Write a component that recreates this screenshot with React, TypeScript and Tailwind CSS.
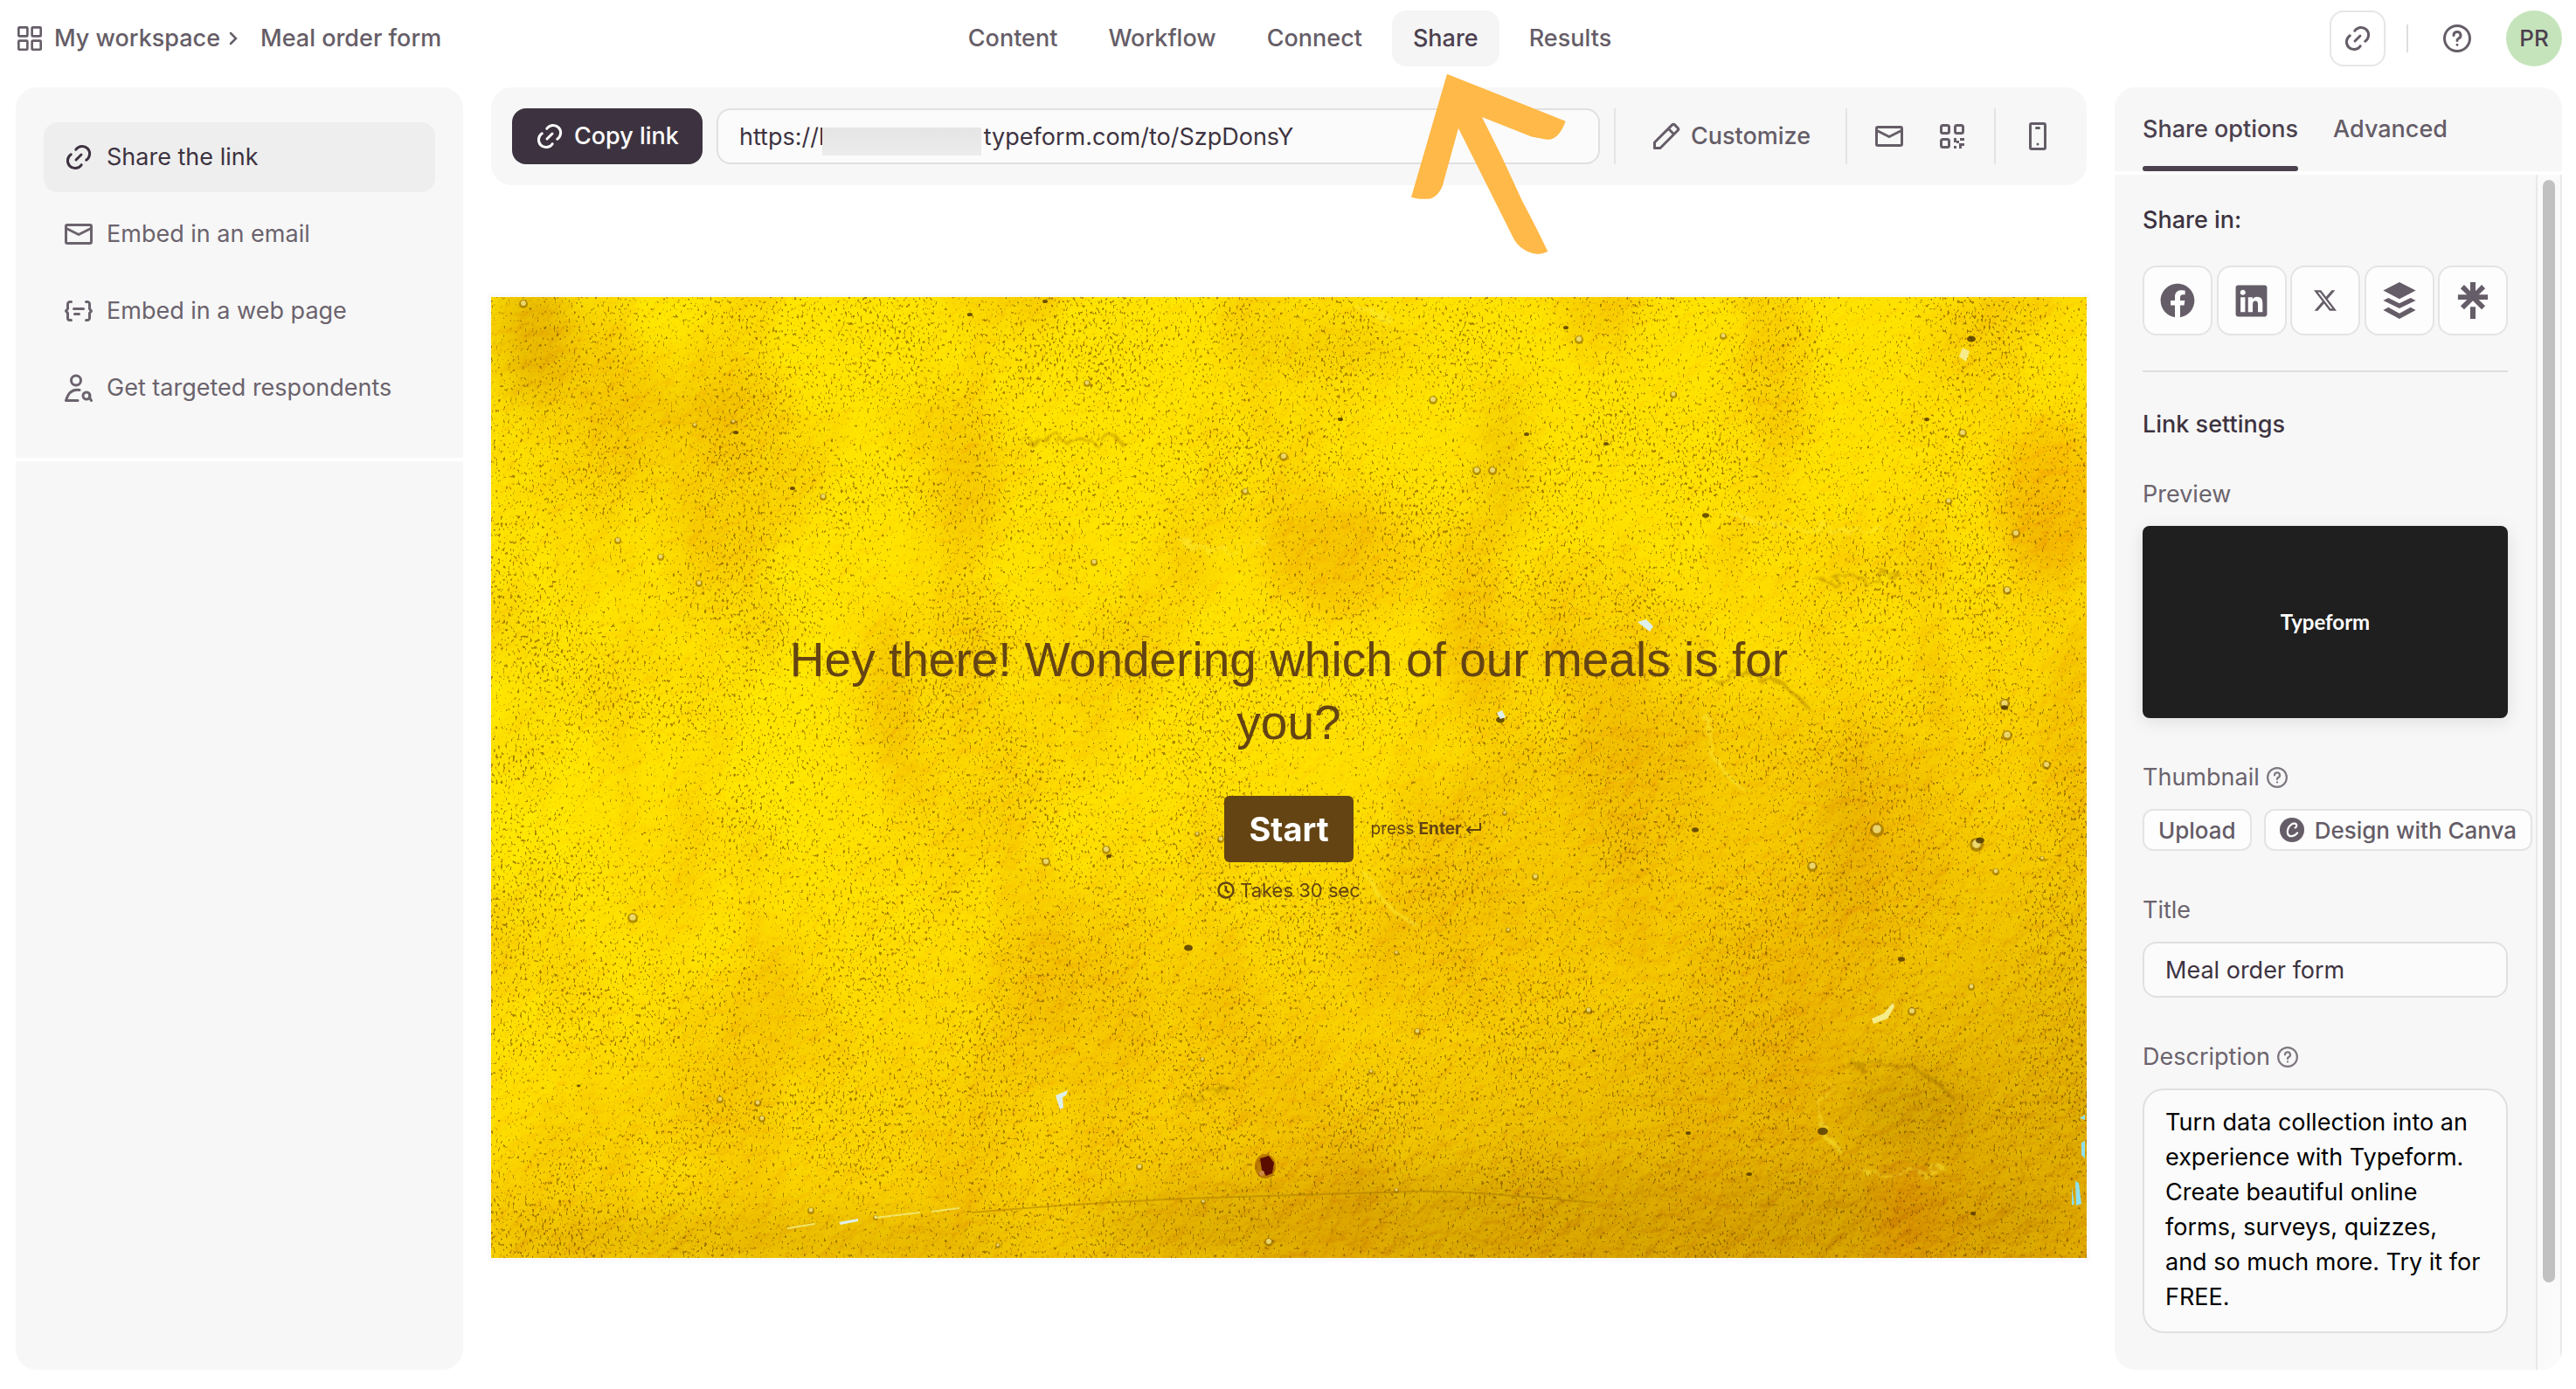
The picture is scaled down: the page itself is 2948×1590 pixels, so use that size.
import type { ReactNode } from "react";
import { FaFacebook, FaLinkedin } from "react-icons/fa";
import { SiBuffer, SiLinktree, SiX } from "react-icons/si";

type IconProps = { children: ReactNode; className?: string };

function Icon({ children, className = "size-8" }: IconProps) {
  return (
    <svg
      viewBox="0 0 32 32"
      fill="none"
      stroke="currentColor"
      strokeWidth="3"
      strokeLinecap="round"
      strokeLinejoin="round"
      aria-hidden="true"
      className={`shrink-0 ${className}`}
    >
      {children}
    </svg>
  );
}

const LinkIcon = () => (
  <Icon>
    <path d="M12.8 7.3A8.6 8.6 0 1 1 24.7 19.2M19.2 24.7A8.6 8.6 0 1 1 7.3 12.8M13 19l6-6" />
  </Icon>
);

const MailIcon = () => (
  <Icon>
    <rect x="1.5" y="5.5" width="29" height="21" rx="1.5" />
    <path d="M2 9.500l14 7 14-7" />
  </Icon>
);

const BracesIcon = () => (
  <Icon>
    <path d="M7.500 5.500H6a2.500 2.500 0 0 0-2.500 2.500v5.500L1.500 16l2 2.500V24A2.500 2.500 0 0 0 6 26.500h1.500M24.500 5.500H26a2.500 2.500 0 0 1 2.500 2.500v5.500l2 2.500-2 2.500V24a2.500 2.500 0 0 1-2.500 2.500h-1.500M10.500 13.500h11M11.500 19.500h5" />
  </Icon>
);

const PersonSearchIcon = () => (
  <Icon>
    <circle cx="13" cy="7.500" r="5.500" />
    <path d="M17 18.500c-8.500-1.500-13 3-15.500 12H15" />
    <circle cx="25" cy="25" r="4" />
    <path d="M28.500 24v3l2 3.500" />
  </Icon>
);

const PencilIcon = () => (
  <Icon>
    <path d="M2.500 29.500v-6.500L22.700 2.900a2 2 0 0 1 2.800 0l3.600 3.600a2 2 0 0 1 0 2.800L9 29.500zM18.500 7.500l6 6" />
  </Icon>
);

const QrIcon = () => (
  <Icon>
    <rect x="3.500" y="3.500" width="9" height="9" rx="2" />
    <rect x="19.500" y="3.500" width="9" height="9" rx="2" />
    <rect x="3.500" y="19.500" width="9" height="9" rx="2" />
    <path
      d="M18 18h3v3h3v3h-3v-1h-3zM25 18h5v3h-5zM18 27h3v3h-3zM24 24h6v3h-3v3h-3z"
      fill="currentColor"
      stroke="none"
    />
  </Icon>
);

const PhoneIcon = () => (
  <Icon>
    <rect x="7.500" y="1.500" width="17" height="29" rx="1.500" />
    <path d="M14.500 6.500h3M16 25v.1" />
  </Icon>
);

const GridIcon = () => (
  <Icon className="size-7">
    <rect x="1.500" y="1.500" width="11.500" height="11.500" rx="1" />
    <rect x="19" y="1.500" width="11.500" height="11.500" rx="1" />
    <rect x="1.500" y="19" width="11.500" height="11.500" rx="1" />
    <rect x="19" y="19" width="11.500" height="11.500" rx="1" />
  </Icon>
);

const HelpIcon = ({ className }: { className?: string }) => (
  <Icon className={className}>
    <circle cx="16" cy="16" r="14.500" />
    <path d="M12 12.500a4 4 0 1 1 5.500 3.700c-1 .4-1.500 1-1.500 2.300M16 23.200v.1" />
  </Icon>
);

const CanvaIcon = () => (
  <svg viewBox="0 0 28 28" className="size-7 shrink-0" aria-hidden="true">
    <circle cx="14" cy="14" r="14" fill="currentColor" />
    <path
      d="M17.500 11.500c1.500-.5 2.300-2.500 1.400-3.900-.9-1.300-3.700-1.400-5.800.2-3.600 2.600-5.200 7.800-3.900 11 1.600 3.700 7.400 3.200 10.900-1.400"
      fill="none"
      stroke="white"
      strokeWidth="2.200"
      strokeLinecap="round"
    />
  </svg>
);

const shareTargets = [
  { name: "Facebook", icon: <FaFacebook className="size-10" /> },
  { name: "LinkedIn", icon: <FaLinkedin className="size-[41px]" /> },
  { name: "X", icon: <SiX className="size-[26px]" /> },
  { name: "Buffer", icon: <SiBuffer className="size-[42px]" /> },
  { name: "Linktree", icon: <SiLinktree className="size-[42px]" /> },
];

const sideItems = [
  { label: "Share the link", icon: <LinkIcon />, active: true },
  { label: "Embed in an email", icon: <MailIcon />, active: false },
  { label: "Embed in a web page", icon: <BracesIcon />, active: false },
  { label: "Get targeted respondents", icon: <PersonSearchIcon />, active: false },
];

const tabs = ["Content", "Workflow", "Connect", "Share", "Results"];

const formUrl = "https://l" + "\u00a0".repeat(24) + "typeform.com/to/SzpDonsY";

// x, y, radius of the small raised bumps in the plaster
const bumps = [
  [907, 182, 5], [863, 222, 4], [1128, 198, 5], [1146, 198, 5], [1078, 117, 5], [1245, 48, 5],
  [635, 646, 5], [704, 632, 5], [1586, 609, 8], [1700, 626, 8], [1512, 651, 6], [1732, 465, 6],
  [1735, 501, 6], [162, 710, 6], [682, 98, 4], [37, 7, 5], [1060, 840, 4], [1626, 817, 5],
  [1694, 789, 4], [1410, 44, 4], [1353, 111, 4], [890, 1081, 5], [277, 142, 3], [380, 228, 4],
  [233, 146, 3], [194, 297, 4], [145, 278, 4], [238, 327, 4], [690, 303, 4], [1684, 155, 5],
  [1668, 233, 4], [1745, 270, 5], [1735, 335, 5], [1780, 535, 5], [1722, 657, 4], [1160, 590, 3],
  [1195, 663, 4], [808, 614, 3], [835, 620, 4], [305, 922, 4], [262, 918, 4], [310, 940, 4],
  [742, 995, 4], [1007, 886, 3], [814, 872, 3], [1256, 816, 4], [1775, 642, 3], [580, 1085, 3],
  [815, 1035, 3], [366, 1045, 4], [440, 1053, 3], [1036, 750, 3], [1164, 724, 3], [1036, 1022, 3],
];

const pits = [
  [798, 745, 5], [1390, 250, 4], [1185, 157, 3], [972, 140, 3], [280, 155, 3], [1276, 168, 3],
  [1155, 484, 5], [1614, 758, 4], [1370, 957, 3], [1440, 1004, 3], [1262, 863, 2], [1643, 140, 3],
  [1694, 48, 5], [1732, 470, 4], [1704, 622, 5], [345, 219, 3], [548, 20, 3], [634, 5, 3],
  [100, 903, 2], [707, 640, 3], [1524, 955, 6], [1696, 1049, 3], [1378, 610, 4], [1230, 35, 3],
];

// cx, cy, rx, ry, colour, opacity of the soft stains
const stains: [number, number, number, number, string, number][] = [
  [50, 40, 40, 80, "#c98a00", 0.4],
  [540, 200, 30, 90, "#e89a00", 0.3],
  [456, 450, 24, 100, "#e08a00", 0.35],
  [545, 450, 22, 90, "#e08a00", 0.3],
  [980, 300, 90, 70, "#f2a400", 0.35],
  [1120, 360, 30, 110, "#e89a00", 0.4],
  [1158, 190, 12, 100, "#d08a00", 0.5],
  [1790, 230, 60, 90, "#f09a00", 0.45],
  [240, 130, 80, 18, "#e09a00", 0.35],
  [950, 60, 110, 30, "#e09a00", 0.25],
  [1550, 640, 18, 100, "#c88600", 0.45],
  [1629, 930, 70, 50, "#b88400", 0.35],
  [1623, 1050, 34, 60, "#e07800", 0.5],
  [990, 1020, 24, 60, "#d08000", 0.35],
  [1400, 620, 300, 160, "#eaae00", 0.3],
  [1250, 1060, 560, 60, "#b88400", 0.3],
  [300, 1080, 300, 30, "#c89000", 0.35],
  [40, 560, 60, 220, "#ffee00", 0.5],
  [330, 480, 60, 200, "#ffee00", 0.4],
];

function PlasterWall() {
  return (
    <svg
      viewBox="0 0 1826 1100"
      preserveAspectRatio="xMidYMid slice"
      className="absolute inset-0 size-full"
      aria-hidden="true"
    >
      <defs>
        <linearGradient id="wall" x1="0.15" y1="0" x2="0.75" y2="1">
          <stop offset="0" stopColor="#ffe500" />
          <stop offset="0.5" stopColor="#ffe000" />
          <stop offset="0.75" stopColor="#f8ce00" />
          <stop offset="1" stopColor="#dfac00" />
        </linearGradient>
        <filter id="soft" x="-50%" y="-50%" width="200%" height="200%">
          <feGaussianBlur stdDeviation="22" />
        </filter>
        <filter id="patches" x="0" y="0" width="100%" height="100%" colorInterpolationFilters="sRGB">
          <feTurbulence type="fractalNoise" baseFrequency="0.006 0.003" numOctaves="7" seed="8" />
          <feColorMatrix values="0 0 0 0 0.9  0 0 0 0 0.6  0 0 0 0 0  3 0 0 0 -1.35" />
        </filter>
        <filter id="specks" x="0" y="0" width="100%" height="100%" colorInterpolationFilters="sRGB">
          <feTurbulence type="fractalNoise" baseFrequency="0.36 0.24" numOctaves="2" seed="3" result="fine" />
          <feTurbulence type="fractalNoise" baseFrequency="0.008" numOctaves="3" seed="21" result="broad" />
          <feComposite in="fine" in2="broad" operator="arithmetic" k1="0" k2="1" k3="0.16" k4="-0.08" />
          <feColorMatrix values="0 0 0 0 0.42  0 0 0 0 0.27  0 0 0 0 0  0 0 0 9 -5.700" />
        </filter>
        <filter id="relief" x="0" y="0" width="100%" height="100%" colorInterpolationFilters="sRGB">
          <feTurbulence type="fractalNoise" baseFrequency="0.05" numOctaves="5" seed="5" />
          <feDiffuseLighting surfaceScale="6" diffuseConstant="0.75" lightingColor="#ffffff">
            <feDistantLight azimuth="240" elevation="45" />
          </feDiffuseLighting>
        </filter>
        <filter id="rough" x="-20%" y="-20%" width="140%" height="140%">
          <feTurbulence type="fractalNoise" baseFrequency="0.06" numOctaves="3" seed="2" />
          <feDisplacementMap in="SourceGraphic" scale="30" />
          <feGaussianBlur stdDeviation="1" />
        </filter>
      </defs>
      <rect width="1826" height="1100" fill="url(#wall)" />
      <g filter="url(#soft)">
        {stains.map(([cx, cy, rx, ry, fill, opacity]) => (
          <ellipse key={`${cx}-${cy}`} cx={cx} cy={cy} rx={rx} ry={ry} fill={fill} opacity={opacity} />
        ))}
      </g>
      <rect width="1826" height="1100" filter="url(#patches)" opacity="0.35" />
      <rect width="1826" height="1100" filter="url(#relief)" className="mix-blend-soft-light" opacity="0.4" />
      <rect width="1826" height="1100" filter="url(#specks)" opacity="0.6" />
      <g filter="url(#rough)" fill="none" strokeLinecap="round">
        <path
          d="M1400 440q60-25 105 28M1560 885q60-30 120 40M780 925q40-18 75-15M610 163h115M1520 325q50 0 90-10"
          stroke="#9a6c00"
          strokeWidth="4"
          opacity="0.4"
        />
        <path
          d="M1395 480q-10 50 35 80M1530 900q-15 40 5 70M1570 1000q30 10 90-5M1000 660q20 40 60 60M1410 245q80 30 180 20M790 280q60 20 100 0M985 5q30 20 40 15"
          stroke="#fff040"
          strokeWidth="4"
          opacity="0.45"
        />
      </g>
      {bumps.map(([x, y, r]) => (
        <g key={`${x}-${y}`}>
          <circle cx={x} cy={y + 1} r={r} fill="#8a6400" opacity="0.6" />
          <circle cx={x} cy={y} r={r * 0.6} fill="#fff090" opacity="0.75" />
        </g>
      ))}
      {pits.map(([x, y, r]) => (
        <ellipse key={`${x}-${y}`} cx={x} cy={y} rx={r} ry={r * 0.7} fill="#4a3200" opacity="0.8" />
      ))}
      <path d="M550 1048q160-14 305-18t199-6 211 13" fill="none" stroke="#a87800" strokeWidth="2" opacity="0.5" />
      <path d="M340 1066l30-5M440 1054l50-6M505 1047l30-4" stroke="#f4f080" strokeWidth="2" strokeLinecap="round" opacity="0.8" />
      <g fill="#dff0ea">
        <path d="M1312 372l10-3 8 8-4 6zM1151 476l6-3 4 8-6 2zM646 914l14-6-2 6-4 2 1 12-4 2zM398 1059l22-4v3l-20 4z" />
        <path d="M1684 58l8 4-4 12-8-6zM1580 826l14-6 10-12 2 4-8 14-16 6z" fill="#f6ec8a" />
        <path d="M1813 1012l4 2 3 24-6 2zM1820 968l4-2v20l-4-4zM1818 940l6-4v6zM1809 1018l3 20-3 2z" fill="#8fe0ee" />
      </g>
      <ellipse cx="886" cy="995" rx="12" ry="14" fill="#8a3a00" opacity="0.5" />
      <path d="M880 986l10-3 6 8-2 12-7 3-5-7z" fill="#5a0c00" />
      <circle cx="882" cy="1003" r="3" fill="#d08a40" />
    </svg>
  );
}

const fieldLabel = "flex h-8 items-center text-[27px] text-[#6b636d]";

function Divider() {
  return <span className="h-full w-0.5 shrink-0 bg-[#e4e4e4]" />;
}

function TopBar() {
  return (
    <header className="grid grid-cols-[1fr_auto_1fr] items-center pt-3 pb-6 pl-0.5 text-[27px] leading-8 font-medium">
      <div className="flex items-center">
        <a href="#workspace" className="flex items-center gap-3.5">
          <GridIcon />
          My workspace
        </a>
        <svg
          viewBox="0 0 10 16"
          className="ml-2.5 h-4 w-2.5"
          fill="none"
          stroke="currentColor"
          strokeWidth="2.500"
          strokeLinecap="round"
          aria-hidden="true"
        >
          <path d="M2 2l6 6-6 6" />
        </svg>
        <a href="#form" className="ml-[26px]">
          Meal order form
        </a>
      </div>
      <nav className="flex gap-2.5">
        {tabs.map((tab) => (
          <div key={tab} className="relative">
            <a
              href={`#${tab.toLowerCase()}`}
              className={
                tab === "Share"
                  ? "flex h-16 items-center rounded-2xl bg-[#f5f5f5] px-6 text-[#4c414f]"
                  : "flex h-16 items-center rounded-2xl px-6"
              }
            >
              {tab}
            </a>
            {tab === "Share" && (
              <svg
                viewBox="0 0 180 210"
                className="pointer-events-none absolute top-[70px] left-5 z-10 h-[210px] w-[180px]"
                aria-hidden="true"
              >
                <path
                  d="M43 2.700L178.700 56.700C172 75 163 80 153 77C148 76 144 75 140.500 74.700L83 52L105 96L130 150C145 178 153 195 158.300 205.700C154 208 150 209 145.600 208.700C134 207 124 201 118.500 189.700L56 64.700L39.500 124.700C37 137 29 147 18 145.700C11 146 7 145 2 143.700Z"
                  fill="#ffb948"
                />
              </svg>
            )}
          </div>
        ))}
      </nav>
      <div className="flex items-center justify-end">
        <button
          aria-label="Copy form link"
          className="flex size-16 items-center justify-center rounded-2xl border-2 border-[#e6e6e6] bg-white"
        >
          <LinkIcon />
        </button>
        <span className="ml-6 h-8 w-0.5 bg-[#dedede]" />
        <button aria-label="Help" className="ml-10">
          <HelpIcon />
        </button>
        <button
          aria-label="Account"
          className="ml-10 flex size-16 items-center justify-center rounded-full bg-[#c6e4bb] text-[26px] text-[#4c414f]"
        >
          PR
        </button>
      </div>
    </header>
  );
}

function ShareMenu() {
  return (
    <aside className="flex w-[512px] shrink-0 flex-col gap-1">
      <nav className="flex flex-col gap-2 rounded-t-3xl bg-[#f7f7f7] px-8 py-10">
        {sideItems.map((item) => (
          <a
            key={item.label}
            href="#share"
            className={
              item.active
                ? "flex h-20 items-center gap-4 rounded-2xl bg-[#eeeeef] px-6 text-[27px] text-[#3d3340]"
                : "flex h-20 items-center gap-4 rounded-2xl px-6 text-[27px] text-[#6b636d]"
            }
          >
            {item.icon}
            {item.label}
          </a>
        ))}
      </nav>
      <div className="flex-1 rounded-b-3xl bg-[#f7f7f7]" />
    </aside>
  );
}

function LinkToolbar() {
  return (
    <div className="flex h-28 items-center rounded-3xl bg-[#f7f7f7] p-6 text-[27px] font-medium">
      <button className="flex h-16 items-center gap-3 rounded-2xl bg-[#3d3340] px-[27px] text-white">
        <LinkIcon />
        Copy link
      </button>
      <div className="relative ml-4 h-16 flex-1">
        <input
          aria-label="Form link"
          readOnly
          value={formUrl}
          className="size-full rounded-2xl border-2 border-[#e0e0e0] bg-[#fbfbfb] px-6 font-normal text-[#3d3340]"
        />
        <span className="absolute top-[22px] left-[121px] h-8 w-[182px] bg-linear-to-b from-[#e5e5e6] to-[#ececec]" />
      </div>
      <div className="ml-4 flex h-16 items-center">
        <Divider />
        <button className="mr-10 ml-[42px] flex items-center gap-3">
          <PencilIcon />
          Customize
        </button>
        <Divider />
        <button aria-label="Share by email" className="ml-8">
          <MailIcon />
        </button>
        <button aria-label="QR code" className="mr-8 ml-10">
          <QrIcon />
        </button>
        <Divider />
        <button aria-label="Mobile preview" className="mr-4 ml-8">
          <PhoneIcon />
        </button>
      </div>
    </div>
  );
}

function FormPreview() {
  return (
    <section className="relative flex aspect-[1826/1100] w-full flex-col items-center justify-center pb-[26px] text-[#644413] ring-4 ring-[#fafafa]">
      <PlasterWall />
      <h1 className="relative max-w-[1200px] text-center font-['Liberation_Sans',sans-serif] text-[55px] leading-[72px]">
        Hey there! Wondering which of our meals is for you?
      </h1>
      <div className="relative mt-12 grid grid-cols-[1fr_auto_1fr] items-center gap-5">
        <span />
        <button className="h-[76px] rounded-md bg-[#644413] px-7 text-[38px] font-bold text-white">Start</button>
        <span className="flex items-center gap-1 text-[19px]">
          <span>
            press <b>Enter</b>
          </span>
          <svg
            viewBox="0 0 18 16"
            className="h-4 w-[18px]"
            fill="none"
            stroke="currentColor"
            strokeWidth="2"
            aria-hidden="true"
          >
            <path d="M17 1v8H2M6 5L2 9l4 4" />
          </svg>
        </span>
      </div>
      <p className="relative mt-4 flex h-8 items-center gap-1.5 text-[22px]">
        <svg
          viewBox="0 0 20 20"
          className="size-5"
          fill="none"
          stroke="currentColor"
          strokeWidth="2.500"
          aria-hidden="true"
        >
          <circle cx="10" cy="10" r="8.500" />
          <path d="M10 5v5l3 3" />
        </svg>
        Takes 30 sec
      </p>
    </section>
  );
}

function OptionsPanel() {
  return (
    <aside className="flex w-[512px] shrink-0 flex-col gap-1">
      <div role="tablist" className="flex h-24 gap-10 rounded-t-3xl bg-[#f7f7f7] px-8 text-[27px] font-medium">
        <button role="tab" aria-selected="true" className="relative h-24 text-[#4c414f]">
          Share options
          <span className="absolute inset-x-0 bottom-0 h-1.5 rounded-full bg-[#4c414f]" />
        </button>
        <button role="tab" aria-selected="false" className="h-24">
          Advanced
        </button>
      </div>
      <div className="flex flex-1 overflow-hidden rounded-b-3xl bg-[#f7f7f7]">
        <div className="flex w-[482px] flex-col px-8 pt-9 pb-10">
          <h2 className="text-[27px] leading-8 font-medium text-[#3d3340]">Share in:</h2>
          <div className="mt-9 flex justify-between">
            {shareTargets.map((target) => (
              <button
                key={target.name}
                aria-label={`Share on ${target.name}`}
                className="flex size-20 items-center justify-center rounded-2xl border-2 border-[#e4e4e4] bg-[#fdfdfd]"
              >
                {target.icon}
              </button>
            ))}
          </div>
          <hr className="mt-10 border-t-2 border-[#dedede]" />
          <h2 className="mt-11 text-[27px] leading-8 font-medium text-[#3d3340]">Link settings</h2>
          <h3 className="mt-12 text-[27px] leading-8 text-[#6b636d]">Preview</h3>
          <div className="mt-5 flex h-[220px] items-center justify-center rounded-lg bg-[#1f1f1f] font-['Lato',sans-serif] text-2xl font-bold text-white shadow-[0_4px_20px_rgba(0,0,0,0.1)]">
            Typeform
          </div>
          <div className="mt-[52px] flex h-8 items-center gap-2 text-[27px] text-[#6b636d]">
            Thumbnail
            <HelpIcon className="size-6 opacity-85" />
          </div>
          <div className="mt-5 flex gap-3.5 text-[26px] font-medium whitespace-nowrap">
            <button className="flex h-12 shrink-0 items-center rounded-xl border-2 border-[#e4e4e4] bg-[#fdfdfd] px-4">
              Upload
            </button>
            <button className="flex h-12 shrink-0 items-center gap-3 rounded-xl border-2 border-[#e4e4e4] bg-[#fdfdfd] px-4">
              <CanvaIcon />
              Design with Canva
            </button>
          </div>
          <label htmlFor="title" className={`mt-[52px] ${fieldLabel}`}>
            Title
          </label>
          <input
            id="title"
            defaultValue="Meal order form"
            className="mt-5 h-16 rounded-2xl border-2 border-[#e0e0e0] bg-[#fbfbfb] px-6 text-[27px] text-[#3d3340]"
          />
          <label htmlFor="description" className={`mt-[52px] gap-2 ${fieldLabel}`}>
            Description
            <HelpIcon className="size-6 opacity-85" />
          </label>
          <textarea
            id="description"
            rows={6}
            defaultValue="Turn data collection into an experience with Typeform. Create beautiful online forms, surveys, quizzes, and so much more. Try it for FREE."
            className="mt-5 h-[280px] resize-none overflow-hidden rounded-3xl border-2 border-[#e0e0e0] bg-[#fbfbfb] px-6 py-[17px] text-[27px] leading-10 text-black"
          />
        </div>
        <div className="flex flex-1 flex-col border-x-2 border-[#e9e9e9] bg-[#fafafa] px-1.5 pt-1.5 pb-[100px]">
          <div className="flex-1 rounded-full bg-[#c1c1c1]" />
        </div>
      </div>
    </aside>
  );
}

export default function App() {
  return (
    <div className="flex min-h-screen flex-col bg-white pr-4 pb-[22px] pl-[18px] font-['Inter',sans-serif] text-[#655d67]">
      <TopBar />
      <div className="flex flex-1 gap-8">
        <ShareMenu />
        <main className="flex min-w-0 flex-1 flex-col">
          <LinkToolbar />
          <div className="flex flex-1 items-center">
            <FormPreview />
          </div>
        </main>
        <OptionsPanel />
      </div>
    </div>
  );
}
